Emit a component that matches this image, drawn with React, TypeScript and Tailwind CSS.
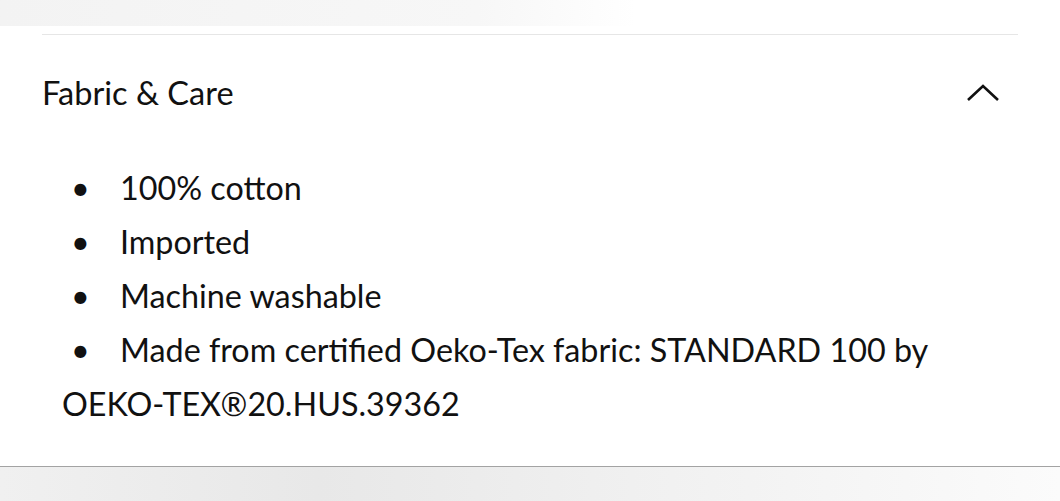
const items = ['100% cotton', 'Imported', 'Machine washable']

function Bullet() {
  return <span className="inline-block w-[58px] pl-[9px]">•</span>
}

export default function App() {
  return (
    <div className="w-[1060px] h-[501px] bg-white flex flex-col overflow-hidden text-[#111] font-['Lato',sans-serif]">
      <div className="h-[26px] bg-gradient-to-r from-[#f3f3f3] via-[#f7f7f7] via-45% to-white to-60%" />
      <div className="mx-[42px] mt-[8px] h-px bg-[#e6e6e6]" />

      <button className="h-[116px] px-[42px] flex items-center justify-between text-left">
        <span className="text-[32.5px] leading-none">Fabric &amp; Care</span>
        <svg width="34" height="20" viewBox="0 0 34 20" className="mr-[18px]" fill="none">
          <path d="M2 17 L17 3 L32 17" stroke="#111" strokeWidth="2.6" />
        </svg>
      </button>

      <div className="pt-[10px] pl-[62px] pr-[60px] text-[32.3px] leading-[54px]">
        {items.map((t) => (
          <p key={t}>
            <Bullet />
            {t}
          </p>
        ))}
        <p>
          <Bullet />
          Made from certified Oeko-Tex fabric: STANDARD 100 by OEKO-TEX®20.HUS.39362
        </p>
      </div>

      <div className="mt-auto h-px bg-[#a3a3a3]" />
      <div className="h-[34px] bg-gradient-to-r from-[#f0f0f0] via-[#e8e8e8] via-30% to-[#fbfbfb]" />
    </div>
  )
}
